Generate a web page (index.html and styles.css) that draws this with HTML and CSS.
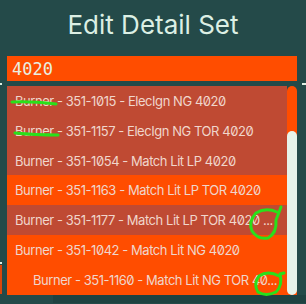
FILE: index.html
```html
<!DOCTYPE html>
<html lang="en">
<head>
    <meta charset="UTF-8">
    <meta name="viewport" content="width=device-width, initial-scale=1.0">
    <title>Edit Detail Set</title>
    <link rel="stylesheet" href="styles.css">
</head>
<body>

    <!-- background edges peeking out behind the dropdown -->
    <div class="edge edge-left-top"></div>
    <div class="edge edge-right-top"></div>
    <div class="edge edge-left-bottom"></div>
    <div class="edge-block"></div>

    <h1 class="title">Edit Detail Set</h1>

    <div class="search">4020</div>

    <div class="dropdown">
        <ul class="options">
            <li class="option">Burner - 351-1015 - ElecIgn NG 4020</li>
            <li class="option">Burner - 351-1157 - ElecIgn NG TOR 4020</li>
            <li class="option">Burner - 351-1054 - Match Lit LP 4020</li>
            <li class="option active">Burner - 351-1163 - Match Lit LP TOR 4020</li>
            <li class="option">Burner - 351-1177 - Match Lit LP TOR 4020 ...</li>
            <li class="option active">Burner - 351-1042 - Match Lit NG 4020</li>
            <li class="option active indent">Burner - 351-1160 - Match Lit NG TOR 40...</li>
        </ul>
        <div class="scrollbar">
            <div class="thumb"></div>
        </div>
    </div>

    <div class="footer"><div class="footer-inner"></div></div>

    <!-- 綠色手寫標記 -->
    <svg class="marks" width="306" height="304" viewBox="0 0 306 304">
        <path d="M12 102 Q30 101 56 104" />
        <path d="M15 133 Q35 135 58 135" />
        <path d="M277 212 Q266 207 256 213 Q248 222 252 231 Q258 240 268 238 Q277 233 276 220 L281 207" />
        <path d="M279 276 Q268 270 259 276 Q253 284 258 292 Q266 297 276 292 Q283 285 280 274 L284 273" />
    </svg>

</body>
</html>
```

FILE: styles.css
```css
body {
    font-family: Inter, "Noto Sans", sans-serif;
    margin: 0;
    padding: 0;
    width: 306px;
    height: 304px;
    overflow: hidden;
    background-color: #244a49;
    position: relative;
}
.title {
    margin: 0;
    padding-top: 8px;
    height: 56px;
    box-sizing: border-box;
    text-align: center;
    font-size: 26px;
    font-weight: 400;
    line-height: 34px;
    color: #dcefe4;
}
.search {
    margin: 0 9px 0 7px;
    height: 25px;
    padding-left: 5px;
    background-color: #ff4d00;
    color: #e9efe2;
    font-family: "DejaVu Sans Mono", monospace;
    font-size: 17px;
    line-height: 27px;
}
.dropdown {
    display: flex;
    margin: 5px 9px 0 7px;
    height: 209px;
}
.options {
    flex: 1;
    margin: 0;
    padding: 0;
    list-style-type: none;
    background-color: #bf4a33;
}
.option {
    height: 29.8px;
    line-height: 30px;
    padding-left: 8px;
    font-size: 13px;
    letter-spacing: -0.45px;
    color: #f0d6cc;
    white-space: nowrap;
    overflow: hidden;
    font-feature-settings: "zero";
}
.option.active {
    background-color: #ff4d00;
}
.option.indent {
    padding-left: 26px;
}
.scrollbar {
    width: 10px;
    background-color: #ff4d00;
    border-radius: 5px 5px 0 0;
    display: flex;
    flex-direction: column;
    justify-content: flex-end;
}
.thumb {
    height: 164px;
    background-color: #e6f3ea;
    border-radius: 5px;
}
.footer {
    height: 8px;
    padding-left: 53px;
}
.footer-inner {
    height: 100%;
    background-color: #1f4241;
}
.edge {
    position: absolute;
    height: 2px;
    background-color: #dcefe4;
}
.edge-left-top {
    left: 0;
    top: 83px;
    width: 2px;
}
.edge-right-top {
    right: 0;
    top: 83px;
    width: 4px;
}
.edge-left-bottom {
    left: 0;
    top: 262px;
    width: 2px;
}
.edge-block {
    position: absolute;
    left: 0;
    top: 265px;
    width: 2px;
    height: 29px;
    background-color: #d9460c;
}
.marks {
    position: absolute;
    left: 0;
    top: 0;
}
.marks path {
    fill: none;
    stroke: #29e01a;
    stroke-width: 3;
    stroke-linecap: round;
    stroke-linejoin: round;
}
```
